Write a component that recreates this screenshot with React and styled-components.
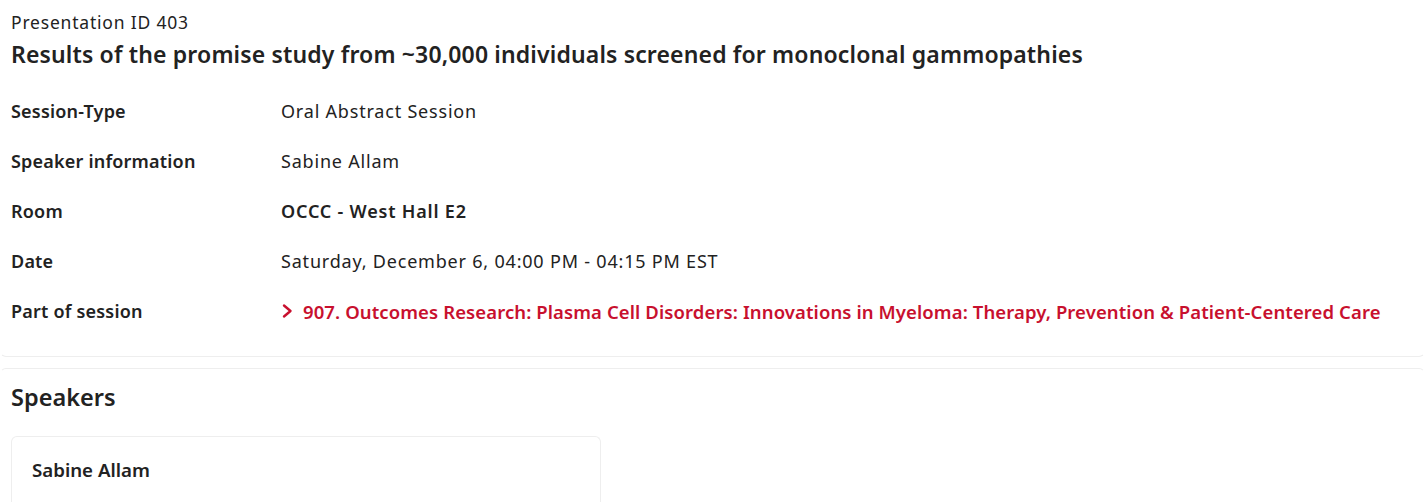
import styled, { createGlobalStyle } from "styled-components";

const GlobalStyle = createGlobalStyle`
  body {
    margin: 0;
    background: #fff;
    font-family: "Noto Sans", "Lato", sans-serif;
    color: #222;
  }
`;

const rows = [
  { label: "Session-Type", value: "Oral Abstract Session" },
  { label: "Speaker information", value: "Sabine Allam" },
  { label: "Room", value: "OCCC - West Hall E2", bold: true },
  { label: "Date", value: "Saturday, December 6, 04:00 PM - 04:15 PM EST" },
];

function Chevron() {
  return (
    <svg width="13" height="16" viewBox="0 0 13 16">
      <path d="M3 2.5 L9.5 8 L3 13.5" fill="none" stroke="currentColor" strokeWidth="2.4" strokeLinecap="round" strokeLinejoin="round" />
    </svg>
  );
}

export default function App() {
  return (
    <>
      <GlobalStyle />
      <Page>
        <Card>
          <Eyebrow>Presentation ID 403</Eyebrow>
          <Title>Results of the promise study from ~30,000 individuals screened for monoclonal gammopathies</Title>
          <Details>
            {rows.map((r) => (
              <Row key={r.label}>
                <Label>{r.label}</Label>
                <Value $bold={r.bold}>{r.value}</Value>
              </Row>
            ))}
            <Row>
              <Label>Part of session</Label>
              <SessionLink href="#">
                <Chevron />
                907. Outcomes Research: Plasma Cell Disorders: Innovations in Myeloma: Therapy, Prevention &amp; Patient-Centered Care
              </SessionLink>
            </Row>
          </Details>
        </Card>
        <Card $top>
          <SectionTitle>Speakers</SectionTitle>
          <SpeakerCard>
            <SpeakerName>Sabine Allam</SpeakerName>
          </SpeakerCard>
        </Card>
      </Page>
    </>
  );
}

const Page = styled.div`
  display: flex;
  flex-direction: column;
  gap: 11px;
`;
const Card = styled.section`
  border: 1px solid #eeeeee;
  border-top: ${(p) => (p.$top ? "1px solid #eeeeee" : "none")};
  border-radius: 6px;
  padding: ${(p) => (p.$top ? "12px 10px 0" : "8px 10px 20px")};
  border-left-color: transparent;
  border-right-color: transparent;
`;
const Eyebrow = styled.div`
  font-size: 17.5px;
  letter-spacing: 0.8px;
  line-height: 28px;
`;
const Title = styled.h1`
  margin: 0 0 14px;
  font-size: 23px;
  font-weight: 600;
  letter-spacing: 0.15px;
  line-height: 36px;
`;
const Details = styled.div`
  display: flex;
  flex-direction: column;
`;
const Row = styled.div`
  display: grid;
  grid-template-columns: 270px 1fr;
  align-items: center;
  height: 50px;
`;
const Label = styled.div`
  font-size: 18px;
  font-weight: 600;
  letter-spacing: 0.2px;
`;
const Value = styled.div`
  font-size: 18px;
  font-weight: ${(p) => (p.$bold ? 600 : 400)};
  letter-spacing: 0.8px;
`;
const SessionLink = styled.a`
  display: flex;
  align-items: center;
  gap: 9px;
  color: #c8102e;
  font-size: 18.5px;
  font-weight: 600;
  letter-spacing: 0.1px;
  text-decoration: none;
`;
const SectionTitle = styled.h2`
  margin: 0 0 23px;
  font-size: 23.5px;
  font-weight: 600;
  line-height: 32px;
`;
const SpeakerCard = styled.div`
  width: 548px;
  border: 1px solid #eeeeee;
  border-bottom: none;
  border-radius: 6px 6px 0 0;
  padding: 20px 20px 40px;
`;
const SpeakerName = styled.div`
  font-size: 18.7px;
  font-weight: 600;
`;
